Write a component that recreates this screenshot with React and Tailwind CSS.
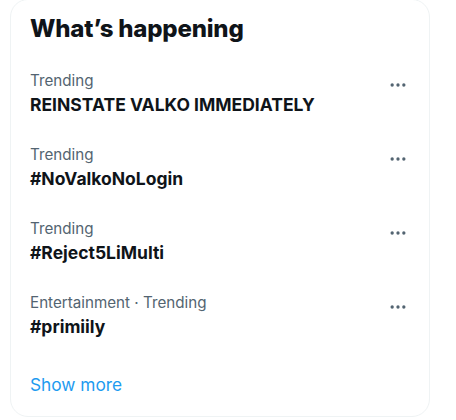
import React from "react";

function Dots() {
  return (
    <svg width="20" height="20" viewBox="0 0 24 24" className="text-[#536471]" fill="currentColor">
      <circle cx="5" cy="12" r="2" />
      <circle cx="12" cy="12" r="2" />
      <circle cx="19" cy="12" r="2" />
    </svg>
  );
}

const trends = [
  { label: "Trending", title: "REINSTATE VALKO IMMEDIATELY" },
  { label: "Trending", title: "#NoValkoNoLogin" },
  { label: "Trending", title: "#Reject5LiMulti" },
  { label: "Entertainment · Trending", title: "#primiily" },
];

export default function App() {
  return (
    <div className="w-[456px] h-[420px] bg-white overflow-hidden font-['Inter',sans-serif]">
      <div className="ml-[10px] -mt-[1px] w-[420px] h-[418px] rounded-[18px] border border-[#eff3f4] flex flex-col">
        <div className="pl-[19px] pt-[14px] h-[56px]">
          <h2 className="text-[24px] leading-[30px] font-extrabold text-[#0f1419] tracking-[-0.2px]">What’s happening</h2>
        </div>
        {trends.map((t, i) => (
          <div key={i} className="h-[74px] pl-[19px] pr-[21px] flex justify-between">
            <div className="pt-[15px]">
              <div className="text-[15.2px] leading-[20px] text-[#536471]">{t.label}</div>
              <div className="mt-[2px] text-[17.5px] leading-[24px] font-bold text-[#0f1419]">{t.title}</div>
            </div>
            <div className="pt-[19px]">
              <Dots />
            </div>
          </div>
        ))}
        <div className="pl-[19px] pt-[21px] text-[17.3px] leading-[24px] text-[#1d9bf0]">Show more</div>
      </div>
    </div>
  );
}
